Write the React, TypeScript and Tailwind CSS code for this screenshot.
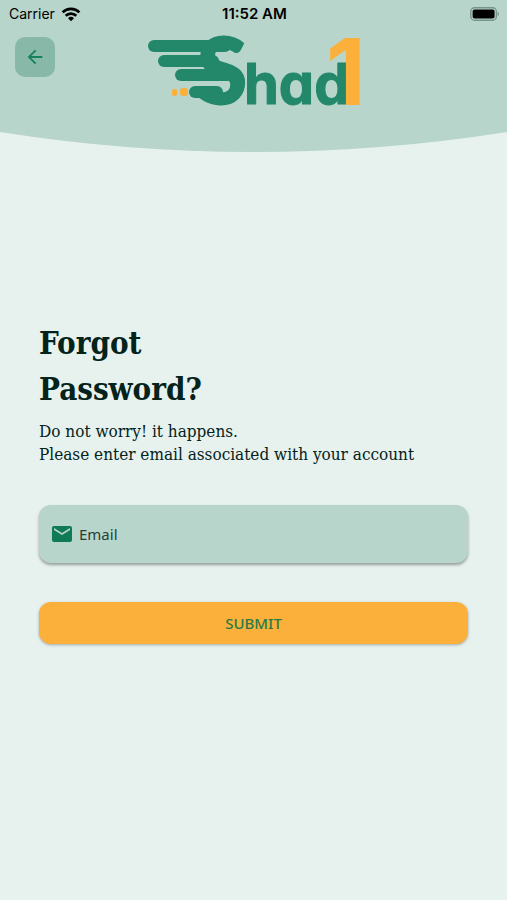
import { useState } from "react";
import type { FormEvent } from "react";
import { MdArrowBack, MdEmail } from "react-icons/md";

function WifiIcon() {
  return (
    <svg viewBox="0 0 20 15" className="h-[15px] w-5" aria-hidden="true">
      <g fill="none" stroke="#000" strokeWidth="2.7">
        <path d="M1.6 5.4a12 12 0 0 1 16.8 0" />
        <path d="M4.7 8.7a7.6 7.6 0 0 1 10.6 0" />
      </g>
      <path d="M10 14.3 7 11.3a4.3 4.3 0 0 1 6 0z" fill="#000" />
    </svg>
  );
}

function BatteryIcon() {
  return (
    <svg viewBox="0 0 30 14" className="h-[14px] w-[30px]" aria-hidden="true">
      <rect x="0.8" y="0.8" width="25.6" height="12.4" rx="3.8" fill="none" stroke="#789388" strokeWidth="1.4" />
      <rect x="2.6" y="2.6" width="22" height="8.8" rx="2" fill="#000" />
      <path d="M27.6 5v4c2-.7 2-3.3 0-4z" fill="#789388" />
    </svg>
  );
}

function StatusBar() {
  return (
    <div className="grid h-7 grid-cols-3 items-center pr-[7px] pl-[9px] text-sm text-black">
      <div className="flex items-center gap-1.5">
        <span>Carrier</span>
        <WifiIcon />
      </div>
      <span className="text-center text-[15px] font-semibold">11:52 AM</span>
      <div className="flex justify-end">
        <BatteryIcon />
      </div>
    </div>
  );
}

function Logo() {
  return (
    <svg viewBox="0 0 214 76" className="h-[76px] w-[214px] overflow-visible" role="img" aria-label="Shad1">
      <g stroke="#23876a" strokeWidth="12" strokeLinecap="round">
        <path d="M7 14H78" />
        <path d="M17 29H66" />
        <path d="M34 43H84" />
        <path d="M48 60H70" />
      </g>
      <rect x="25" y="57" width="5" height="7" rx="2" fill="#fbb03b" />
      <rect x="33" y="56" width="8" height="8" rx="3" fill="#fbb03b" />
      <g fill="#23876a" stroke="#23876a" strokeLinejoin="round">
        <text x="50" y="72" fontSize="91" strokeWidth="2" className="font-[Lato,sans-serif] font-black">S</text>
        <text x="97" y="72" fontSize="56" strokeWidth="1" className="font-[Inter,sans-serif] font-bold [font-feature-settings:'cv11']">had</text>
      </g>
      <text x="179" y="73" fontSize="92" fill="#fbb03b" className="font-[Inter,sans-serif] font-bold">1</text>
    </svg>
  );
}

function Header() {
  return (
    <header>
      <div className="h-[132px] bg-[#b7d5ca]">
        <StatusBar />
        <div className="grid grid-cols-[1fr_auto_1fr] items-start px-[15px] pt-1">
          <button
            type="button"
            aria-label="Go back"
            className="mt-[5px] flex size-10 items-center justify-center rounded-[10px] bg-[#88b9a8] text-[#17805e]"
          >
            <MdArrowBack size={22} />
          </button>
          <Logo />
        </div>
      </div>
      <svg viewBox="0 0 100 20" preserveAspectRatio="none" className="block h-5 w-full" aria-hidden="true">
        <path d="M0 0Q50 40 100 0z" fill="#b7d5ca" />
      </svg>
    </header>
  );
}

export default function App() {
  const [email, setEmail] = useState("");

  const handleSubmit = (e: FormEvent) => {
    e.preventDefault();
  };

  return (
    <div className="min-h-screen bg-[#e7f1ee] font-[Inter,sans-serif]">
      <Header />
      <main className="px-[39px] pt-[168px] pb-10">
        <div className="font-['DejaVu_Serif_Condensed','DejaVu_Serif',serif] text-[#03231b]">
          <h1 className="text-[31px] leading-[46px] font-bold">
            Forgot
            <br />
            Password?
          </h1>
          <p className="mt-2 text-[17px] leading-[23px]">
            Do not worry! it happens.
            <br />
            Please enter email associated with your account
          </p>
        </div>

        <form onSubmit={handleSubmit} className="mt-[39px] font-['Noto_Sans',sans-serif]">
          <div className="flex h-[58px] items-center rounded-xl bg-[#b7d5ca] px-[11px] shadow-[0_2px_3px_rgba(0,0,0,0.35)]">
            <label htmlFor="email" className="flex items-center gap-[5px] text-[15px] text-[#234139]">
              <MdEmail size={24} className="text-[#0f7a56]" />
              Email
            </label>
            <input
              id="email"
              type="email"
              value={email}
              onChange={(e) => setEmail(e.target.value)}
              className="ml-2 h-full min-w-0 flex-1 bg-transparent text-[15px] text-[#234139] outline-none"
            />
          </div>
          <button
            type="submit"
            className="mt-[39px] h-[42px] w-full rounded-xl bg-[#fbb03b] text-[15px] font-medium text-[#2b7a45] shadow-[0_1px_3px_rgba(0,0,0,0.3)]"
          >
            SUBMIT
          </button>
        </form>
      </main>
    </div>
  );
}
